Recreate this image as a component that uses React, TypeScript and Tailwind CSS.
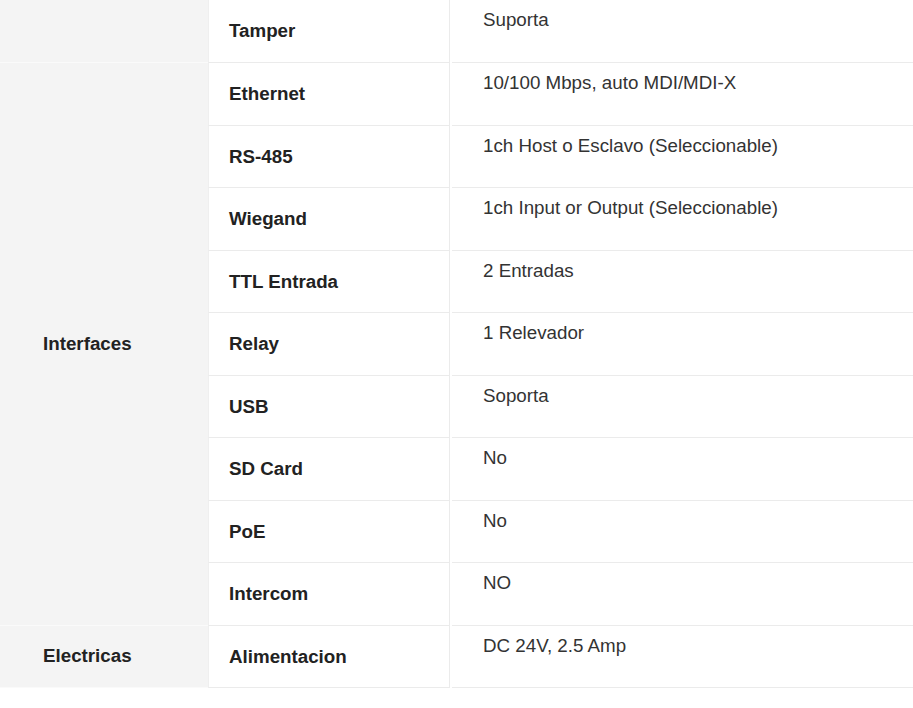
import React from "react";

const rows: { label: string; value: string }[] = [
  { label: "Tamper", value: "Suporta" },
  { label: "Ethernet", value: "10/100 Mbps, auto MDI/MDI-X" },
  { label: "RS-485", value: "1ch Host o Esclavo (Seleccionable)" },
  { label: "Wiegand", value: "1ch Input or Output (Seleccionable)" },
  { label: "TTL Entrada", value: "2 Entradas" },
  { label: "Relay", value: "1 Relevador" },
  { label: "USB", value: "Soporta" },
  { label: "SD Card", value: "No" },
  { label: "PoE", value: "No" },
  { label: "Intercom", value: "NO" },
  { label: "Alimentacion", value: "DC 24V, 2.5 Amp" },
];

export default function App() {
  return (
    <div
      className="w-[913px] h-[708px] bg-white overflow-hidden text-[18.75px]"
      style={{ fontFamily: '"Liberation Sans", Arial, sans-serif' }}
    >
      <div className="grid grid-cols-[208px_242px_1fr] grid-rows-[63px_repeat(10,62.5px)]">
        {/* column 1 */}
        <div className="col-start-1 row-start-1 bg-[#f4f4f4] border-b border-[#fafafa]" />
        <div className="col-start-1 row-start-2 row-span-9 bg-[#f4f4f4] border-b border-[#fafafa] flex items-center pl-[43px] font-bold text-[#222]">
          Interfaces
        </div>
        <div className="col-start-1 row-start-11 bg-[#f4f4f4] border-b border-[#fafafa] flex items-center pl-[43px] font-bold text-[#222]">
          Electricas
        </div>
        {rows.map((r, i) => (
          <React.Fragment key={r.label}>
            <div
              className="col-start-2 border-l border-r border-b border-l-[#efefef] border-r-[#ebebeb] border-b-[#ebebeb] flex items-center pl-[20px] pt-[1px] font-bold text-[#222]"
              style={{ gridRowStart: i + 1 }}
            >
              {r.label}
            </div>
            <div
              className="col-start-3 ml-[2px] border-b border-[#ebebeb] pt-[6px] pl-[31px] text-[#333]"
              style={{ gridRowStart: i + 1 }}
            >
              {r.value}
            </div>
          </React.Fragment>
        ))}
      </div>
    </div>
  );
}
